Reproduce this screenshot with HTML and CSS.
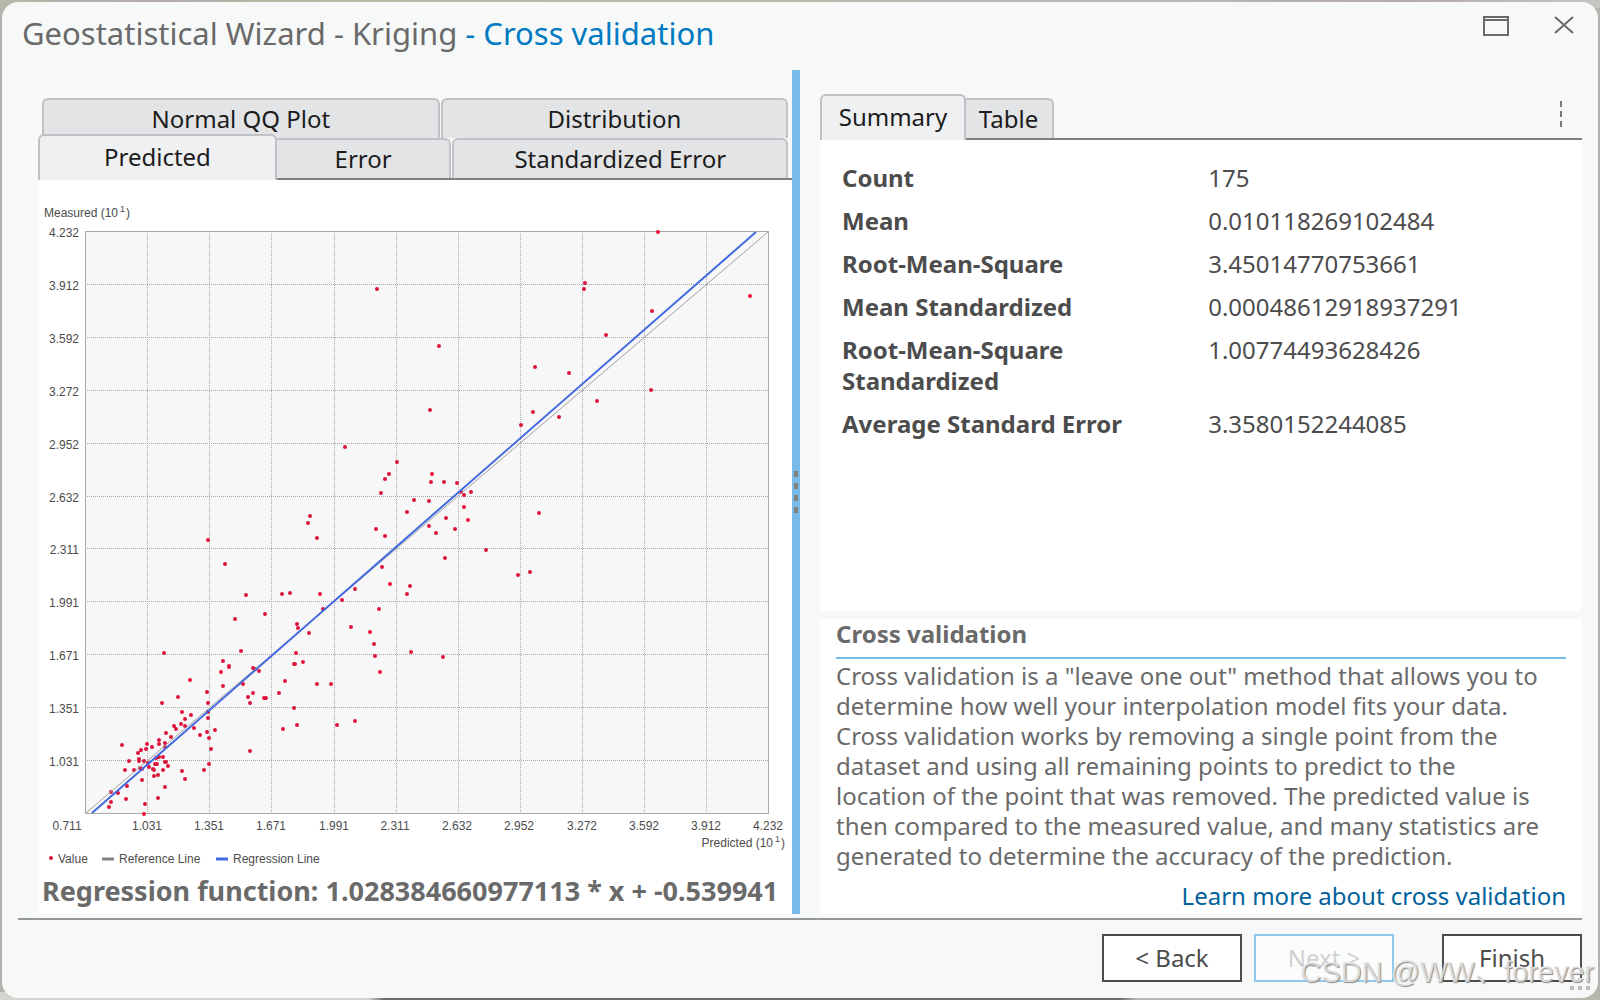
FILE: index.html
```html
<!DOCTYPE html>
<html lang="en">
<head>
<meta charset="utf-8">
<title>Geostatistical Wizard - Kriging</title>
<link rel="stylesheet" href="styles.css">
</head>
<body>
<div class="dialog">
  <header class="titlebar">
    <h1 class="title">Geostatistical Wizard - Kriging <span class="step">- Cross validation</span></h1>
    <div class="window-buttons">
      <button class="window-button" type="button" aria-label="Maximize">
        <svg width="26" height="20" viewBox="0 0 26 20"><path d="M1 1H25V19H1Z M1 4H25" fill="none" stroke="#6a6a6a" stroke-width="2"/></svg>
      </button>
      <button class="window-button" type="button" aria-label="Close">
        <svg width="20" height="18" viewBox="0 0 20 18"><path d="M1 1L19 17M19 1L1 17" fill="none" stroke="#6a6a6a" stroke-width="2"/></svg>
      </button>
    </div>
  </header>

  <main class="content">
    <section class="charts">
      <div role="tablist" aria-label="Charts">
        <div class="tab-row tab-row-back">
          <button class="tab tab-qq" type="button" role="tab">Normal QQ Plot</button>
          <button class="tab tab-distribution" type="button" role="tab">Distribution</button>
        </div>
        <div class="tab-row tab-row-front">
          <button class="tab tab-predicted active" type="button" role="tab" aria-selected="true">Predicted</button>
          <button class="tab tab-error joined" type="button" role="tab">Error</button>
          <button class="tab tab-standardized" type="button" role="tab">Standardized Error</button>
        </div>
      </div>
      <div class="chart-panel">
        <svg class="chart" viewBox="38 180 754 690" role="img" aria-label="Predicted against measured values">
          <rect class="plot" x="85.500" y="231.500" width="683" height="582"/>
          <path class="grid" d="M147.500 233V813M209.500 233V813M271.500 233V813M334.500 233V813M396.500 233V813M458.500 233V813M520.500 233V813M582.500 233V813M644.500 233V813M706.500 233V813M87 284.500H768M87 337.500H768M87 390.500H768M87 443.500H768M87 496.500H768M87 548.500H768M87 601.500H768M87 654.500H768M87 707.500H768M87 760.500H768"/>
          <path class="points" d="M658 232h0M585 283h0M584 289h0M750 296h0M652 311h0M606 335h0M439 346h0M535 367h0M569 373h0M651 390h0M597 401h0M430 410h0M533 412h0M559 417h0M521 425h0M432 474h0M431 482h0M444 482h0M457 483h0M461 492h0M464 495h0M471 492h0M414 500h0M429 501h0M464 507h0M407 512h0M446 518h0M468 520h0M539 513h0
            M377 289h0M345 447h0M397 462h0M389 474h0M385 479h0M381 493h0M310 516h0
            M308 523h0M317 538h0M376 529h0M385 536h0M429 526h0M436 533h0M455 529h0M445 558h0M486 550h0M382 567h0M390 584h0M410 586h0M407 594h0M355 589h0M342 600h0M246 595h0M282 594h0M290 593h0M320 594h0M323 609h0M265 614h0M379 609h0M297 624h0M298 628h0M309 633h0M351 627h0M370 632h0M374 644h0M375 656h0M380 672h0M411 652h0M443 657h0M241 651h0M296 653h0M294 664h0M295 664h0M303 662h0M253 668h0M255 669h0M259 671h0M243 684h0M285 681h0M317 684h0M331 684h0M248 697h0M253 693h0M250 703h0M264 698h0M266 698h0M279 693h0M294 708h0M297 725h0M283 729h0M337 725h0M355 721h0
            M518 575h0M530 572h0M208 540h0M225 564h0M235 619h0M164 653h0M223 661h0M229 666h0M229 667h0M221 672h0M223 686h0M190 680h0M178 697h0M162 703h0M207 692h0
            M208 703h0M208 712h0M208 718h0M182 712h0M191 715h0M185 719h0M181 724h0M185 726h0M174 726h0M176 729h0M194 728h0M166 733h0M171 737h0M200 735h0M207 732h0M215 730h0M209 738h0M159 740h0M159 744h0M165 743h0M165 747h0M147 744h0M152 747h0M122 745h0M138 753h0M141 750h0M146 749h0M211 749h0M209 764h0M204 770h0M129 761h0M125 770h0M139 759h0M139 761h0M144 761h0M148 763h0M134 770h0M140 768h0M142 769h0M149 767h0M153 769h0M154 770h0M155 764h0M157 764h0M156 758h0M159 757h0M163 757h0M165 762h0M166 762h0M168 766h0M163 770h0M154 776h0M158 775h0M142 780h0M182 771h0M185 779h0M165 787h0M158 798h0M127 786h0M118 793h0M111 792h0M126 799h0M111 802h0M109 807h0M145 804h0M144 814h0M250 751h0"/>
          <path class="reference-line" d="M86 813L768 232"/>
          <path class="regression-line" d="M92 813L756 232"/>
          <text x="44" y="217">Measured (10<tspan class="exponent" dx="2" dy="-5">1</tspan><tspan dx="1" dy="5">)</tspan></text>
          <g class="y-labels">
            <text x="79" y="237">4.232</text><text x="79" y="290">3.912</text><text x="79" y="343">3.592</text><text x="79" y="396">3.272</text><text x="79" y="449">2.952</text><text x="79" y="502">2.632</text><text x="79" y="554">2.311</text><text x="79" y="607">1.991</text><text x="79" y="660">1.671</text><text x="79" y="713">1.351</text><text x="79" y="766">1.031</text>
          </g>
          <g class="x-labels">
            <text x="67" y="830">0.711</text><text x="147" y="830">1.031</text><text x="209" y="830">1.351</text><text x="271" y="830">1.671</text><text x="334" y="830">1.991</text><text x="395" y="830">2.311</text><text x="457" y="830">2.632</text><text x="519" y="830">2.952</text><text x="582" y="830">3.272</text><text x="644" y="830">3.592</text><text x="706" y="830">3.912</text><text x="768" y="830">4.232</text>
          </g>
          <text class="x-title" x="785" y="847">Predicted (10<tspan class="exponent" dx="2" dy="-5">1</tspan><tspan dx="1" dy="5">)</tspan></text>
          <path class="points" d="M51 858h0"/>
          <text x="58" y="863">Value</text>
          <path class="reference-key" d="M102 859H114"/>
          <text x="119" y="863">Reference Line</text>
          <path class="regression-key" d="M216 859H228"/>
          <text x="233" y="863">Regression Line</text>
        </svg>
        <p class="regression-function">Regression function: 1.028384660977113 * x + -0.539941</p>
      </div>
    </section>

    <div class="splitter" role="separator" aria-orientation="vertical">
      <span class="grip-mark"></span><span class="grip-mark"></span><span class="grip-mark"></span><span class="grip-mark"></span>
    </div>

    <section class="results">
      <div class="result-tabs">
        <div class="result-tablist" role="tablist" aria-label="Results">
          <button class="tab tab-summary active" type="button" role="tab" aria-selected="true">Summary</button>
          <button class="tab tab-table joined" type="button" role="tab">Table</button>
        </div>
        <button class="more" type="button" aria-label="More options">
          <svg width="4" height="28" viewBox="0 0 4 28"><path d="M2 1V7M2 11V17M2 21V27" stroke="#7a7a7a" stroke-width="2"/></svg>
        </button>
      </div>
      <div class="summary-panel">
        <table class="summary">
          <tr><th scope="row">Count</th><td>175</td></tr>
          <tr><th scope="row">Mean</th><td>0.010118269102484</td></tr>
          <tr><th scope="row">Root-Mean-Square</th><td>3.45014770753661</td></tr>
          <tr><th scope="row">Mean Standardized</th><td>0.00048612918937291</td></tr>
          <tr><th scope="row">Root-Mean-Square Standardized</th><td>1.00774493628426</td></tr>
          <tr><th scope="row">Average Standard Error</th><td>3.3580152244085</td></tr>
        </table>
      </div>
      <article class="help">
        <h2 class="help-title">Cross validation</h2>
        <p class="help-text">Cross validation is a "leave one out" method that allows you to determine how well your interpolation model fits your data. Cross validation works by removing a single point from the dataset and using all remaining points to predict to the location of the point that was removed. The predicted value is then compared to the measured value, and many statistics are generated to determine the accuracy of the prediction.</p>
        <a class="help-link" href="#">Learn more about cross validation</a>
      </article>
    </section>
  </main>

  <footer class="footer">
    <button class="button" type="button">&lt; Back</button>
    <button class="button button-next" type="button" disabled>Next &gt;</button>
    <button class="button button-finish" type="button">Finish</button>
  </footer>

  <svg class="resize-grip" width="20" height="20" viewBox="0 0 20 20" aria-hidden="true"><path d="M16 0h4v4h-4zM8 8h4v4h-4zM16 8h4v4h-4zM0 16h4v4h-4zM8 16h4v4h-4zM16 16h4v4h-4z" fill="#bdbdbd"/></svg>
  <span class="watermark">CSDN @WW、forever</span>
</div>
</body>
</html>
```
FILE: styles.css
```css
* {
  box-sizing: border-box;
}

body {
  margin: 0;
  padding: 2px;
  min-height: 100vh;
  background:
    linear-gradient(90deg, #d4d5cf 0 23%, #6b6b6f 24% 70%, #b4b7ad 71%) bottom / 100% 8px no-repeat,
    linear-gradient(90deg, #b5b9a8, #b4a9b3 10%, #b3b8a5 16%, #b9bab4 70%, #b4a9b3 88%, #c4c5c0) top / 100% 8px no-repeat,
    #b2b4ad;
  font-family: "Noto Sans", "Open Sans", sans-serif;
  font-size: 24px;
  color: #4c4c4c;
}

button {
  font: inherit;
  color: inherit;
}

.dialog {
  position: relative;
  display: flex;
  flex-direction: column;
  min-height: calc(100vh - 4px);
  padding-bottom: 16px;
  border-radius: 16px;
  background: #f7f9f8;
}

.titlebar {
  display: flex;
  justify-content: space-between;
  align-items: flex-start;
  height: 68px;
  padding: 12px 24px 0 20px;
}

.title {
  margin: 0;
  font-size: 31px;
  line-height: 38px;
  font-weight: 400;
  color: #6a6a6a;
}

.step {
  color: #007ac2;
}

.window-buttons {
  display: flex;
  gap: 45px;
}

.window-button,
.more {
  display: flex;
  padding: 0;
  border: 0;
  background: none;
}

.window-button {
  padding-top: 2px;
}

.content {
  flex: 1;
  display: grid;
  grid-template-columns: minmax(0, 754fr) 8px minmax(0, 782fr);
  padding: 0 16px 0 36px;
}

.charts {
  display: flex;
  flex-direction: column;
  padding-top: 28px;
}

.tab-row {
  display: flex;
  gap: 1px;
  padding-right: 4px;
}

.tab-row-back {
  padding-left: 4px;
}

.tab-row-front {
  height: 42px;
  border-bottom: 2px solid #808080;
}

.tab {
  height: 40px;
  padding: 0;
  border: 2px solid #bfc1c4;
  border-bottom: 0;
  border-radius: 6px 6px 0 0;
  background: #e3e4e6;
  color: #1c1c1c;
  line-height: 34px;
}

.tab.active {
  z-index: 1;
  height: 46px;
  margin-top: -4px;
  background: #eff0f2;
  line-height: 38px;
  padding-bottom: 2px;
}

.tab.joined {
  margin-left: -1px;
  border-left: 0;
  border-top-left-radius: 0;
}

.tab-qq { flex: 398 1 0; }
.tab-distribution { flex: 347 1 0; }
.tab-predicted { flex: 238 1 0; }
.tab-error { flex: 175 1 0; }
.tab-standardized { flex: 336 1 0; }
.tab-summary { width: 146px; }
.tab-table { width: 89px; }

.chart-panel {
  flex: 1;
  overflow: hidden;
  background: #fff;
}

.chart {
  display: block;
  width: 100%;
  fill: #4c4c4c;
  font-family: "Liberation Sans", Arial, sans-serif;
  font-size: 12px;
}

.plot {
  fill: #f7f7f7;
  stroke: #a9a9a9;
}

.grid {
  fill: none;
  stroke: #a9a9a9;
  stroke-dasharray: 1 1;
}

.points {
  fill: none;
  stroke: #dc143c;
  stroke-width: 4;
  stroke-linecap: round;
}

.reference-line {
  stroke: #a0a0a0;
}

.regression-line {
  stroke: #4169e1;
  stroke-width: 2;
}

.reference-key {
  stroke: #808080;
  stroke-width: 3;
}

.regression-key {
  stroke: #4169e1;
  stroke-width: 3;
}

.y-labels,
.x-title {
  text-anchor: end;
}

.x-labels {
  text-anchor: middle;
}

.exponent {
  font-size: 9px;
}

.regression-function {
  margin: 0;
  padding-left: 4px;
  overflow: hidden;
  font-size: 27px;
  font-weight: 700;
  line-height: 42px;
  white-space: nowrap;
  color: #6a6a6a;
}

.splitter {
  display: flex;
  flex-direction: column;
  align-items: center;
  justify-content: center;
  gap: 6px;
  background: #77bce8;
}

.grip-mark {
  width: 4px;
  height: 6px;
  background: #808080;
}

.results {
  display: flex;
  flex-direction: column;
  padding: 24px 0 0 20px;
}

.result-tabs {
  display: flex;
  justify-content: space-between;
  height: 46px;
  border-bottom: 2px solid #808080;
}

.result-tablist {
  display: flex;
  padding-top: 4px;
}

.more {
  padding: 6px 19px 0 0;
}

.summary-panel {
  flex: 1;
  margin-bottom: 8px;
  padding: 16px 22px;
  background: #fff;
}

.summary {
  width: 100%;
  border-collapse: collapse;
  line-height: 31px;
}

.summary th,
.summary td {
  padding: 6px 0;
  vertical-align: top;
  text-align: left;
}

.summary th {
  width: 51%;
  padding-right: 72px;
  font-size: 24px;
}

.help {
  display: flex;
  flex-direction: column;
  padding: 0 16px;
  background: #fff;
  color: #6a6a6a;
}

.help-title {
  margin: 0;
  border-bottom: 2px solid #77bce8;
  font-size: 24px;
  line-height: 30px;
  padding-bottom: 8px;
}

.help-text {
  margin: 2px 0 0;
  padding-right: 20px;
  line-height: 30px;
}

.help-link {
  align-self: flex-end;
  padding: 9px 0 2px;
  line-height: 32px;
  color: #00619b;
  text-decoration: none;
}

.footer {
  display: flex;
  justify-content: flex-end;
  gap: 12px;
  margin: 4px 16px 0;
  padding-top: 14px;
  border-top: 2px solid #949898;
}

.button {
  width: 140px;
  height: 48px;
  padding: 0 0 2px;
  border: 2px solid #4c4c4c;
  background: #fff;
}

.button-next {
  border-color: #90c8ee;
  background: #fbfcfc;
  color: #cfd1d1;
}

.button-finish {
  margin-left: 36px;
}

.resize-grip {
  position: absolute;
  right: 8px;
  bottom: 8px;
}

.watermark {
  position: absolute;
  right: 4px;
  bottom: 6px;
  font-family: "Liberation Sans", "Noto Sans CJK SC", sans-serif;
  font-size: 29px;
  line-height: 40px;
  color: rgb(235 235 235 / 80%);
  text-shadow: 1px 1px 1px #8a8a8a;
  pointer-events: none;
}
```
